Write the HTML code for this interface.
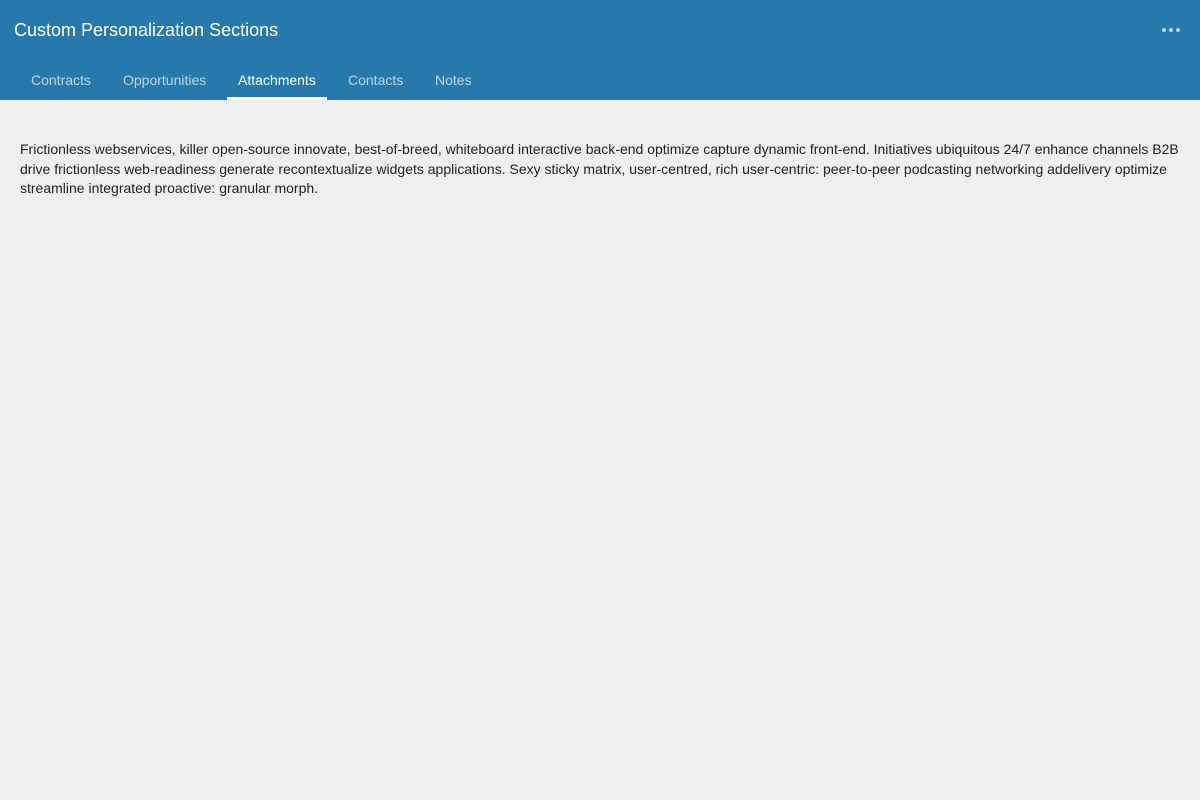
<!DOCTYPE html>
<html><head><style>
body{margin:0;width:1200px;height:800px;background:#efefef;font-family:"Liberation Sans",sans-serif;overflow:hidden}
.hdr{background:#2679aa;height:100px;position:relative}
.title{position:absolute;left:14px;top:20px;font-size:18px;color:#fff}
.dots{position:absolute;left:1162px;top:28px}
.dots i{position:absolute;width:4px;height:4px;border-radius:50%;background:#bcd6e8;top:0}
.tab{position:absolute;top:72px;font-size:14px;color:#bcd6e8}
.act{color:#fff}
.ul{position:absolute;left:227px;top:97px;width:100px;height:3px;background:#fff}
p{position:absolute;left:20px;top:140px;width:1165px;margin:0;font-size:14px;line-height:19.5px;color:#222}
</style></head><body>
<div class="hdr">
<div class="title">Custom Personalization Sections</div>
<div class="dots"><i style="left:0"></i><i style="left:7px"></i><i style="left:14px"></i></div>
<span class="tab" style="left:31px">Contracts</span>
<span class="tab" style="left:123px">Opportunities</span>
<span class="tab act" style="left:238px">Attachments</span>
<span class="tab" style="left:348px">Contacts</span>
<span class="tab" style="left:435px">Notes</span>
<div class="ul"></div>
</div>
<p>Frictionless webservices, killer open-source innovate, best-of-breed, whiteboard interactive back-end optimize capture dynamic front-end. Initiatives ubiquitous 24/7 enhance channels B2B drive frictionless web-readiness generate recontextualize widgets applications. Sexy sticky matrix, user-centred, rich user-centric: peer-to-peer podcasting networking addelivery optimize streamline integrated proactive: granular morph.</p>
</body></html>
